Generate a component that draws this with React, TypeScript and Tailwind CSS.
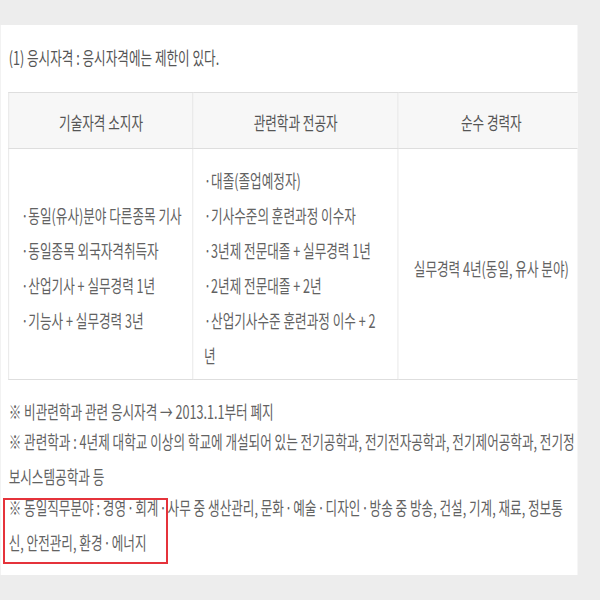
import React from 'react';

// 응시자격 table: the source capture is squeezed horizontally, so the panel is laid out wide and scaled on x
const techHolders = [
  '· 동일(유사)분야 다른종목 기사',
  '· 동일종목 외국자격취득자',
  '· 산업기사 + 실무경력 1년',
  '· 기능사 + 실무경력 3년',
];

const majors = [
  '· 대졸(졸업예정자)',
  '· 기사수준의 훈련과정 이수자',
  '· 3년제 전문대졸 + 실무경력 1년',
  '· 2년제 전문대졸 + 2년',
  '· 산업기사수준 훈련과정 이수 + 2',
  '년',
];

// the CJK middle dot is full width, the original one sits tighter
function withDots(text: string) {
  return text.split(/( ·|^·)/).map((part, i) => {
    if (part === ' ·') return <span key={i} className="tracking-[-2.5px]">{part}</span>;
    if (part === '·') return <span key={i} className="tracking-[-4px]">{part}</span>;
    return <React.Fragment key={i}>{part}</React.Fragment>;
  });
}

export default function App() {
  return (
    <div className="relative w-[600px] h-[600px] overflow-hidden bg-[#ededed] font-['Noto_Sans_CJK_KR',sans-serif]">
      <div className="w-[857px] origin-top-left scale-x-[0.7] pt-[25px]">
        <div className="ml-[1.4px] w-[824px] h-[550px] overflow-hidden bg-white px-[11px] text-[18px] text-[#626262]">
          <p className="pt-[20px] leading-[24px] text-[#555]">(1) 응시자격 : 응시자격에는 제한이 있다.</p>

          <table className="mt-[23px] w-[822px] table-fixed border-collapse">
            <colgroup>
              <col className="w-[263px]" />
              <col className="w-[293px]" />
              <col className="w-[266px]" />
            </colgroup>
            <thead>
              <tr className="bg-[#f7f7f7] text-[#555]">
                <th className="h-[56px] border border-[#dedede] pt-[4px] font-normal">기술자격 소지자</th>
                <th className="h-[56px] border border-[#dedede] pt-[4px] font-normal">관련학과 전공자</th>
                <th className="h-[56px] border border-[#dedede] pt-[4px] font-normal">순수 경력자</th>
              </tr>
            </thead>
            <tbody>
              <tr>
                <td className="border border-[#dedede] pl-[17px] pt-[14px] pb-[6px] align-middle">
                  {techHolders.map((line) => (
                    <div key={line} className="leading-[35px] whitespace-nowrap">{withDots(line)}</div>
                  ))}
                </td>
                <td className="border border-[#dedede] pl-[15px] pt-[14px] pb-[6px] align-middle">
                  {majors.map((line) => (
                    <div key={line} className="leading-[35px] whitespace-nowrap">{withDots(line)}</div>
                  ))}
                </td>
                <td className="border border-[#dedede] pt-[14px] pb-[6px] text-center align-middle">
                  실무경력 4년(동일, 유사 분야)
                </td>
              </tr>
            </tbody>
          </table>

          <div className="mt-[14px] whitespace-nowrap leading-[35px]">
            <p>※ 비관련학과 관련 응시자격 → 2013.1.1부터 폐지</p>
            <p className="-mt-[5px]">
              ※ 관련학과 : 4년제 대학교 이상의 학교에 개설되어 있는 전기공학과, 전기전자공학과, 전기제어공학과, 전기정
              <br />
              보시스템공학과 등
            </p>
            <p className="-mt-[4px]">
              {withDots('※ 동일직무분야 : 경영 · 회계 · 사무 중 생산관리, 문화 · 예술 · 디자인 · 방송 중 방송, 건설, 기계, 재료, 정보통')}
              <br />
              {withDots('신, 안전관리, 환경 · 에너지')}
            </p>
          </div>
        </div>
      </div>

      {/* highlight box over the last note */}
      <div className="absolute left-[3px] top-[498px] w-[165px] h-[66px] border-2 border-[#e5333b]" />
    </div>
  );
}
